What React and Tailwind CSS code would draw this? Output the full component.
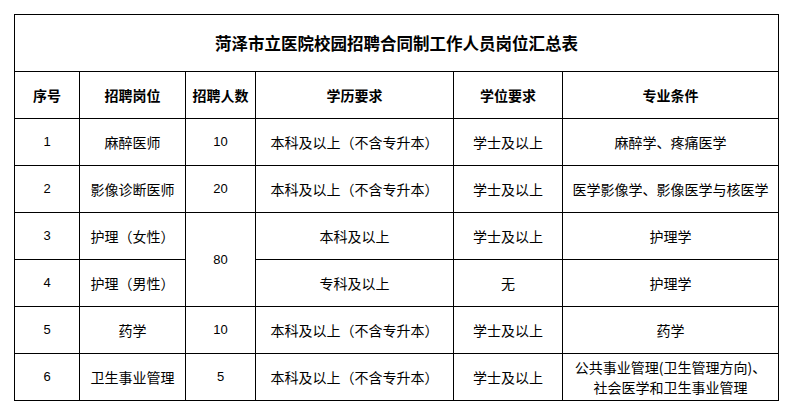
import React from "react";

const rows = [
  { no: "1", post: "麻醉医师", num: "10", edu: "本科及以上（不含专升本）", degree: "学士及以上", major: ["麻醉学、疼痛医学"] },
  { no: "2", post: "影像诊断医师", num: "20", edu: "本科及以上（不含专升本）", degree: "学士及以上", major: ["医学影像学、影像医学与核医学"] },
  { no: "3", post: "护理（女性）", num: "80", span: 2, edu: "本科及以上", degree: "学士及以上", major: ["护理学"] },
  { no: "4", post: "护理（男性）", num: null, edu: "专科及以上", degree: "无", major: ["护理学"] },
  { no: "5", post: "药学", num: "10", edu: "本科及以上（不含专升本）", degree: "学士及以上", major: ["药学"] },
  { no: "6", post: "卫生事业管理", num: "5", edu: "本科及以上（不含专升本）", degree: "学士及以上", major: ["公共事业管理(卫生管理方向)、", "社会医学和卫生事业管理"] },
];

const heads = ["序号", "招聘岗位", "招聘人数", "学历要求", "学位要求", "专业条件"];

const cell = "border border-black text-center align-middle p-0";
const numFont = "text-[13px] font-['Liberation_Sans','Noto_Sans_CJK_SC',sans-serif]";

export default function App() {
  return (
    <div className="bg-white w-[793px] h-[413px] pt-[14px] pl-[14px] text-black font-['Noto_Sans_CJK_SC',sans-serif]">
      <table className="table-fixed border-collapse w-[765px] text-[14px] leading-[18px]">
        <colgroup>
          <col className="w-[65px]" />
          <col className="w-[106px]" />
          <col className="w-[70px]" />
          <col className="w-[198px]" />
          <col className="w-[109px]" />
          <col className="w-[216px]" />
        </colgroup>
        <tbody>
          <tr className="h-[57px]">
            <td colSpan={6} className={`${cell} text-[16.5px] font-bold`}>
              菏泽市立医院校园招聘合同制工作人员岗位汇总表
            </td>
          </tr>
          <tr className="h-[47px]">
            {heads.map(h => (
              <td key={h} className={`${cell} font-bold`}>{h}</td>
            ))}
          </tr>
          {rows.map(r => (
            <tr key={r.no} className="h-[47px]">
              <td className={`${cell} ${numFont}`}>{r.no}</td>
              <td className={cell}>{r.post}</td>
              {r.num !== null && (
                <td rowSpan={r.span || 1} className={`${cell} ${numFont}`}>{r.num}</td>
              )}
              <td className={cell}>{r.edu}</td>
              <td className={cell}>{r.degree}</td>
              <td className={`${cell} leading-[20px]`}>
                {r.major.map(m => (
                  <div key={m}>{m}</div>
                ))}
              </td>
            </tr>
          ))}
        </tbody>
      </table>
    </div>
  );
}
